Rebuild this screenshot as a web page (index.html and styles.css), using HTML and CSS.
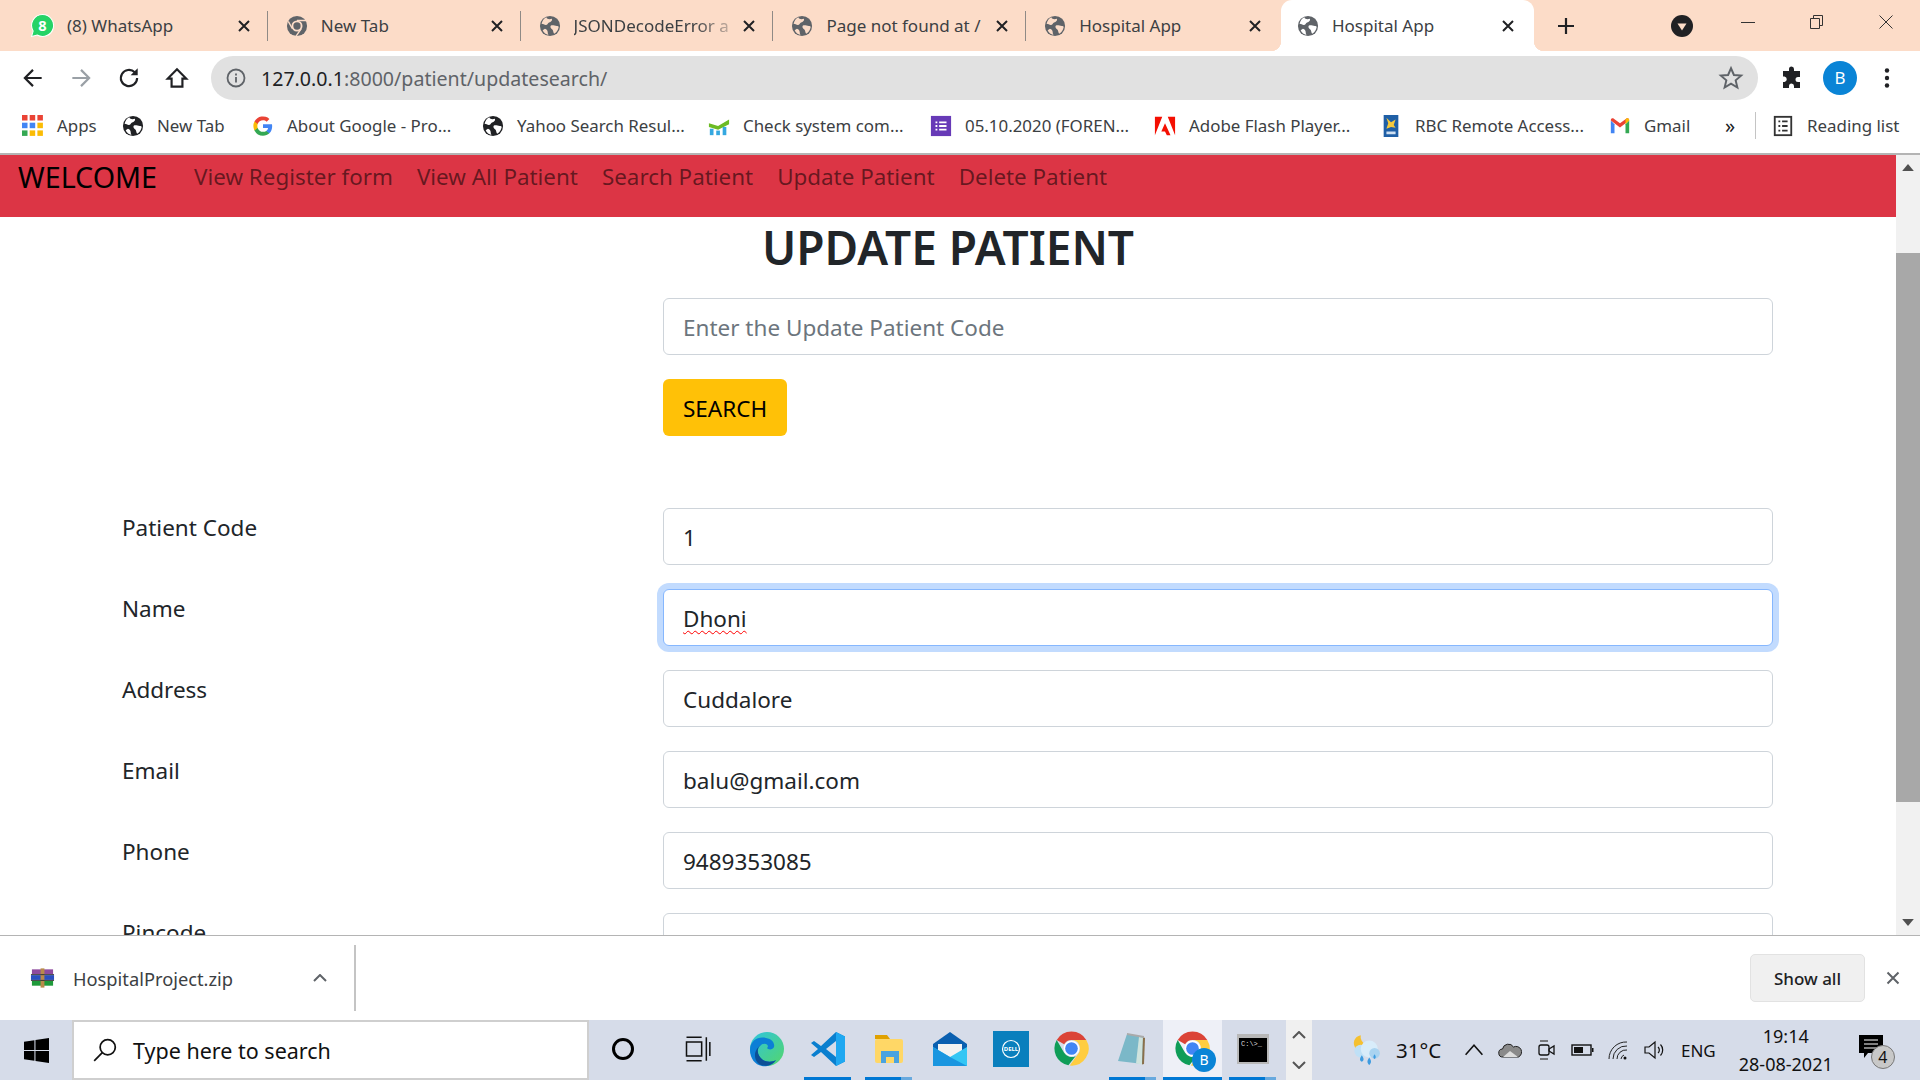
FILE: index.html
```html
<!DOCTYPE html>
<html>
<head>
    <meta charset="utf-8">
    <title>Hospital App</title>
    <link rel="stylesheet" href="styles.css">
</head>
<body>
<svg class="defs" width="0" height="0">
    <symbol id="globe" viewBox="0 0 24 24">
        <circle cx="12" cy="12" r="11" fill="currentColor"/>
        <path d="M8 2.5c1 2.5 4 2.3 6 1.500 1 2-1 3.500-3 4.200-1.500.6-1.200 2.300-3.200 2.600-1.800.3-3-1.300-5-1.300C3.500 6.500 5.500 3.800 8 2.500zM13 11.500c2.500-.8 4 .5 6.500.5 1 0 1.800.5 2 1-.6 3.500-2.700 6-5 7.500-1.200-2-.8-4-2.300-5-1.300-.9-2.500-2.500-1.200-4zM6.500 15c1.800.5 3 1.800 3 3.800 0 1 .3 2 .8 3-2.700-.5-5-2.300-6.300-4.800.7-.8 1.500-1.500 2.500-2z" fill="#fcdcc8"/>
    </symbol>
    <symbol id="globe-b" viewBox="0 0 24 24">
        <circle cx="12" cy="12" r="11" fill="currentColor"/>
        <path d="M8 2.5c1 2.5 4 2.3 6 1.500 1 2-1 3.500-3 4.200-1.500.6-1.200 2.300-3.200 2.600-1.800.3-3-1.300-5-1.300C3.500 6.500 5.500 3.800 8 2.500zM13 11.500c2.500-.8 4 .5 6.500.5 1 0 1.800.5 2 1-.6 3.500-2.700 6-5 7.500-1.200-2-.8-4-2.300-5-1.300-.9-2.500-2.500-1.200-4zM6.500 15c1.800.5 3 1.800 3 3.800 0 1 .3 2 .8 3-2.700-.5-5-2.300-6.300-4.800.7-.8 1.500-1.500 2.500-2z" fill="#fff"/>
    </symbol>
    <symbol id="close" viewBox="0 0 14 14">
        <path d="M2 2l10 10M12 2L2 12" stroke="currentColor" stroke-width="2" fill="none"/>
    </symbol>
    <symbol id="chrome" viewBox="0 0 24 24">
        <path d="M12 2a10 10 0 0 1 8.660 5H12a5 5 0 0 0-4.330 2.500L3.340 7A10 10 0 0 1 12 2z" fill="#db4437"/>
        <path d="M3.340 7l4.330 7.500a5 5 0 0 0 6.830 1.830L10.170 21.830A10 10 0 0 1 3.340 7z" fill="#0f9d58"/>
        <path d="M20.660 7H12a5 5 0 0 1 4.330 7.500L11 22A10 10 0 0 0 20.660 7z" fill="#ffcd40"/>
        <circle cx="12" cy="12" r="4.600" fill="#fff"/>
        <circle cx="12" cy="12" r="3.700" fill="#4285f4"/>
    </symbol>
</svg>

<div class="tabstrip">
    <div class="tab">
        <svg class="tab-icon wa" viewBox="0 0 24 24"><path d="M12 1.500a10.500 10.500 0 0 0-9 15.800L1.500 22.500l5.400-1.400A10.500 10.500 0 1 0 12 1.500z" fill="#25d366" stroke="#fff"/><text x="12" y="17" class="wa-count">8</text></svg>
        <span class="tab-title">(8) WhatsApp</span>
        <svg class="tab-close"><use href="#close"/></svg>
    </div>
    <div class="tab">
        <svg class="tab-icon" viewBox="0 0 24 24"><circle cx="12" cy="12" r="11" fill="#5f6368"/><circle cx="12" cy="12" r="6" fill="#fcdcc8"/><circle cx="12" cy="12" r="4" fill="#5f6368"/><path d="M12 6h10M7 15L2.500 7M16.500 15L11 23" stroke="#fcdcc8" stroke-width="1.500"/></svg>
        <span class="tab-title">New Tab</span>
        <svg class="tab-close"><use href="#close"/></svg>
    </div>
    <div class="tab">
        <svg class="tab-icon"><use href="#globe"/></svg>
        <span class="tab-title fade">JSONDecodeError a</span>
        <svg class="tab-close"><use href="#close"/></svg>
    </div>
    <div class="tab">
        <svg class="tab-icon"><use href="#globe"/></svg>
        <span class="tab-title">Page not found at /</span>
        <svg class="tab-close"><use href="#close"/></svg>
    </div>
    <div class="tab no-sep">
        <svg class="tab-icon"><use href="#globe"/></svg>
        <span class="tab-title">Hospital App</span>
        <svg class="tab-close"><use href="#close"/></svg>
    </div>
    <div class="tab active">
        <svg class="tab-icon"><use href="#globe-b"/></svg>
        <span class="tab-title">Hospital App</span>
        <svg class="tab-close"><use href="#close"/></svg>
    </div>
    <svg class="new-tab" viewBox="0 0 18 18"><path d="M9 1v16M1 9h16" stroke="#202124" stroke-width="2.200"/></svg>
    <div class="tab-search"><svg viewBox="0 0 24 24"><circle cx="12" cy="12" r="11" fill="#202124"/><path d="M7.500 9.500h9L12 16.500z" fill="#fcdcc8"/></svg></div>
    <div class="win-btns">
        <svg viewBox="0 0 14 14"><path d="M0 7.500h14" stroke="#333" stroke-width="1"/></svg>
        <svg viewBox="0 0 14 14"><path d="M.5 3.500h9v10h-9zM3.500 3.500v-3h9v10h-3" stroke="#333" fill="none"/></svg>
        <svg viewBox="0 0 14 14"><path d="M.5.500l13 13M13.500.500l-13 13" stroke="#333" fill="none"/></svg>
    </div>
</div>

<div class="toolbar">
    <svg class="nav-icon" viewBox="0 0 24 24"><path d="M20 12H5M12 4.500L4.500 12l7.500 7.500" stroke="#202124" stroke-width="2" fill="none"/></svg>
    <svg class="nav-icon" viewBox="0 0 24 24"><path d="M4 12h15M12 4.500l7.500 7.500-7.500 7.500" stroke="#9aa0a6" stroke-width="2" fill="none"/></svg>
    <svg class="nav-icon" viewBox="0 0 24 24"><path d="M19.500 12a7.500 7.500 0 1 1-2.200-5.300" stroke="#202124" stroke-width="2" fill="none"/><path d="M20 3v6.500h-6.500z" fill="#202124"/></svg>
    <svg class="nav-icon" viewBox="0 0 24 24"><path d="M12 4L3.500 12.500H7V20h10v-7.500h3.500z" stroke="#202124" stroke-width="2" fill="none"/></svg>
    <div class="omnibox">
        <svg class="info" viewBox="0 0 20 20"><circle cx="10" cy="10" r="8.500" stroke="#5f6368" stroke-width="1.800" fill="none"/><path d="M10 9v5.500M10 5.500v2" stroke="#5f6368" stroke-width="1.800"/></svg>
        <span class="url"><b>127.0.0.1</b>:8000/patient/updatesearch/</span>
        <svg class="star" viewBox="0 0 24 24"><path d="M12 3l2.700 6.200 6.700.6-5.100 4.400 1.600 6.600L12 17.300l-5.900 3.500 1.600-6.600-5.100-4.400 6.700-.6z" stroke="#5f6368" stroke-width="1.800" fill="none"/></svg>
    </div>
    <svg class="puzzle" viewBox="0 0 24 24"><path d="M9 3a2.500 2.500 0 0 1 5 0v2h6v6h-2a2.500 2.500 0 0 0 0 5h2v6h-6v-2a2.500 2.500 0 0 0-5 0v2H3v-6h1.500a2.800 2.800 0 0 0 0-5.500H3V5h6z" fill="#202124"/></svg>
    <div class="avatar">B</div>
    <svg class="dots" viewBox="0 0 6 24"><circle cx="3" cy="4.500" r="2.200" fill="#202124"/><circle cx="3" cy="12" r="2.200" fill="#202124"/><circle cx="3" cy="19.500" r="2.200" fill="#202124"/></svg>
</div>

<div class="bookmarks">
    <div class="bm">
        <svg class="bm-icon" viewBox="0 0 20 20">
            <g fill="#ea4335"><rect x="0" y="0" width="5" height="5"/><rect x="7" y="0" width="5" height="5"/><rect x="14" y="0" width="5" height="5"/></g>
            <g fill="#4285f4"><rect x="0" y="7" width="5" height="5"/><rect x="7" y="7" width="5" height="5"/></g>
            <rect x="14" y="7" width="5" height="5" fill="#fbbc05"/>
            <g fill="#34a853"><rect x="0" y="14" width="5" height="5"/></g>
            <g fill="#fbbc05"><rect x="7" y="14" width="5" height="5"/><rect x="14" y="14" width="5" height="5"/></g>
        </svg>Apps
    </div>
    <div class="bm"><svg class="bm-icon globe-dark"><use href="#globe-b"/></svg>New Tab</div>
    <div class="bm">
        <svg class="bm-icon" viewBox="0 0 24 24">
            <path d="M22 12.300c0-.8-.1-1.500-.2-2.200H12v4.200h5.600a4.800 4.800 0 0 1-2.100 3.100v2.600h3.400c2-1.800 3.100-4.500 3.100-7.700z" fill="#4285f4"/>
            <path d="M12 22.500c2.800 0 5.200-.9 6.900-2.500l-3.400-2.600c-.9.600-2.100 1-3.500 1-2.700 0-5-1.800-5.800-4.300H2.700v2.700A10.500 10.500 0 0 0 12 22.500z" fill="#34a853"/>
            <path d="M6.200 14.100a6.300 6.300 0 0 1 0-4.200V7.200H2.700a10.500 10.500 0 0 0 0 9.600z" fill="#fbbc05"/>
            <path d="M12 5.700c1.500 0 2.900.5 4 1.600l3-3A10.500 10.500 0 0 0 2.700 7.200l3.500 2.700C7 7.500 9.300 5.700 12 5.700z" fill="#ea4335"/>
        </svg>About Google - Pro...
    </div>
    <div class="bm"><svg class="bm-icon globe-dark"><use href="#globe-b"/></svg>Yahoo Search Resul...</div>
    <div class="bm">
        <svg class="bm-icon" viewBox="0 0 24 24"><path d="M1 9l10 3 12-7v5l-12 6-10-3z" fill="#6cbb24"/><rect x="2" y="15" width="4" height="7" fill="#35a8e0"/><rect x="9" y="17" width="4" height="5" fill="#35a8e0"/><rect x="16" y="13" width="4" height="9" fill="#35a8e0"/></svg>Check system com...
    </div>
    <div class="bm">
        <svg class="bm-icon" viewBox="0 0 24 24"><rect x="1" y="1" width="22" height="22" fill="#673ab7"/><path d="M6 7h2v2H6zM10 7h8v2h-8zM6 11h2v2H6zM10 11h8v2h-8zM6 15h2v2H6zM10 15h8v2h-8z" fill="#fff"/></svg>05.10.2020 (FOREN...
    </div>
    <div class="bm">
        <svg class="bm-icon" viewBox="0 0 24 24"><path d="M1 2h8L1 22zM15 2h8v20zM12 9l6 13h-4l-2-4H8z" fill="#f40f02"/></svg>Adobe Flash Player...
    </div>
    <div class="bm">
        <svg class="bm-icon" viewBox="0 0 24 24"><rect x="4" y="0" width="16" height="24" fill="#1f5fa6"/><path d="M7 3l5 5 5-3-2 6 2 3-5-1-5 2 2-6z" fill="#f6c93c"/><rect x="7" y="18" width="10" height="3" fill="#cfe0f2"/></svg>RBC Remote Access...
    </div>
    <div class="bm">
        <svg class="bm-icon" viewBox="0 0 24 24"><path d="M2 6v14h4V10z" fill="#4285f4"/><path d="M22 6v14h-4V10z" fill="#34a853"/><path d="M2 6l10 7.500L22 6v-.5c0-1.800-2-2.500-3.300-1.500L12 9 5.300 4C4 3 2 3.700 2 5.500z" fill="#ea4335"/><path d="M18 10l4-4v-.5c0-1.800-2-2.500-3.300-1.500L18 4.500z" fill="#fbbc05"/></svg>Gmail
    </div>
    <div class="bm-more">»</div>
    <div class="bm-sep"></div>
    <div class="bm">
        <svg class="bm-icon reading" viewBox="0 0 24 24"><rect x="3" y="2" width="18" height="20" stroke="#333" stroke-width="2" fill="none"/><path d="M7 7h2M11 7h6M7 12h2M11 12h6M7 17h2M11 17h6" stroke="#333" stroke-width="2"/></svg>Reading list
    </div>
</div>

<div class="viewport">
    <div class="page">
        <nav class="navbar">
            <a class="brand">WELCOME</a>
            <a class="nav-link">View Register form</a>
            <a class="nav-link">View All Patient</a>
            <a class="nav-link">Search Patient</a>
            <a class="nav-link">Update Patient</a>
            <a class="nav-link">Delete Patient</a>
        </nav>
        <h1 class="title">UPDATE PATIENT</h1>
        <div class="search-box">
            <input class="form-control" placeholder="Enter the Update Patient Code">
            <button class="btn-search">SEARCH</button>
        </div>
        <div class="patient-form">
            <label>Patient Code</label>
            <input class="form-control" value="1">
            <label>Name</label>
            <div class="form-control focused"><span class="misspelt">Dhoni</span></div>
            <label>Address</label>
            <input class="form-control" value="Cuddalore">
            <label>Email</label>
            <input class="form-control" value="balu@gmail.com">
            <label>Phone</label>
            <input class="form-control" value="9489353085">
            <label>Pincode</label>
            <input class="form-control">
        </div>
    </div>
    <div class="scrollbar">
        <svg class="arrow" viewBox="0 0 10 6"><path d="M5 0l5 6H0z" fill="#505050"/></svg>
        <div class="thumb"></div>
        <svg class="arrow" viewBox="0 0 10 6"><path d="M5 6l5-6H0z" fill="#505050"/></svg>
    </div>
</div>

<div class="download-bar">
    <div class="download-item">
        <svg class="zip-icon" viewBox="0 0 26 20">
            <rect x="2" y="1" width="22" height="5" fill="#8e4a9e"/><rect x="1" y="7" width="24" height="5" fill="#2a4fc0"/><rect x="2" y="13" width="22" height="5" fill="#1f9a3a"/>
            <path d="M11 0h4v20h-4z" fill="#b98a4a"/><path d="M1 6.500h24M1 12.500h24" stroke="#333"/>
        </svg>
        <span class="zip-name">HospitalProject.zip</span>
        <svg class="chev" viewBox="0 0 14 8"><path d="M1 7l6-6 6 6" stroke="#5f6368" stroke-width="2" fill="none"/></svg>
    </div>
    <div class="download-right">
        <button class="show-all">Show all</button>
        <svg class="bar-close" viewBox="0 0 14 14"><path d="M1.500 1.500l11 11M12.500 1.500l-11 11" stroke="#5f6368" stroke-width="2"/></svg>
    </div>
</div>

<div class="taskbar">
    <div class="start"><svg viewBox="0 0 24 24"><path d="M0 3.500l10-1.400V11.500H0zM11 2l13-2v11.500H11zM0 12.500h10v9.400L0 20.500zM11 12.500h13V24l-13-2z" fill="#000"/></svg></div>
    <div class="task-search">
        <svg viewBox="0 0 24 24"><circle cx="14.500" cy="9.500" r="7" stroke="#111" stroke-width="1.600" fill="none"/><path d="M9.500 14.500L2 22" stroke="#111" stroke-width="1.600"/></svg>
        <span>Type here to search</span>
    </div>
    <div class="task-apps">
        <div class="app slot-cortana"><svg class="cortana" viewBox="0 0 24 24"><circle cx="12" cy="12" r="9.500" stroke="#000" stroke-width="3" fill="none"/></svg></div>
        <div class="app slot-view"><svg class="taskview" viewBox="0 0 24 24"><path d="M3 6h13v12H3zM20 2v20M23 6v12M3 2h13M3 22h13" stroke="#111" stroke-width="1.300" fill="none"/></svg></div>
        <div class="app">
            <svg viewBox="0 0 36 36">
                <defs><linearGradient id="edge" x1="0" y1="0" x2="1" y2="1"><stop offset="0" stop-color="#2fc4e0"/><stop offset="1" stop-color="#54d66a"/></linearGradient></defs>
                <circle cx="18" cy="18" r="17" fill="url(#edge)"/>
                <path d="M1 19C1 9 10 5 17 7c6 1 9 5 8 9-1 3-6 3-7 1 3-3-2-6-6-3-5 3-4 11 2 15 4 2.500 10 2 13 0-3 5-9 7-14 6C6 34 1 27 1 19z" fill="#0c7fd6"/>
                <path d="M12 14c-5 3-4 11 2 15 4 2.500 10 2 13 0-3 5-10 7-15 5-7-3-9-14 0-20z" fill="#0c4f96"/>
            </svg>
        </div>
        <div class="app running">
            <svg viewBox="0 0 36 36"><path d="M26 1l9 4.500v25L26 35 11 21l-7 5-3-2 7-6-7-6 3-2 7 5z" fill="#0a7fcf"/><path d="M26 1l9 4.500v25L26 35z" fill="#1fa8f1"/><path d="M26 10L16 18l10 8z" fill="#d6dce9"/></svg>
        </div>
        <div class="app running more">
            <svg viewBox="0 0 36 36"><path d="M4 4h12l3 4H4z" fill="#e0a100"/><rect x="4" y="8" width="28" height="24" rx="2" fill="#ffd766"/><path d="M10 20h18v12h-5v-6h-8v6h-5z" fill="#4aa3e0"/></svg>
        </div>
        <div class="app">
            <svg viewBox="0 0 36 36"><path d="M18 1L35 13v22H1V13z" fill="#0a5fb0"/><path d="M6 13h24v8l-12 6-12-6z" fill="#f2f2f2"/><path d="M1 16l17 10 17-10v19H1z" fill="#34c6f4"/><path d="M1 16l17 10L35 35H1z" fill="#1a96e0"/></svg>
        </div>
        <div class="app">
            <svg viewBox="0 0 36 36"><rect width="36" height="36" fill="#0a7fbd"/><circle cx="18" cy="18" r="8.500" stroke="#fff" stroke-width="1.200" fill="none"/><text x="18" y="20" class="dell-word">DELL</text></svg>
        </div>
        <div class="app"><svg class="chrome" viewBox="0 0 24 24"><use href="#chrome"/></svg></div>
        <div class="app running more">
            <svg viewBox="0 0 36 36"><path d="M12 3l17 3-1 27-25-3z" fill="#7bb8c8"/><path d="M24 6l4 .5-1 27-6-1z" fill="#cfe3dd"/><path d="M28 6l2 1-1 26-2 .5z" fill="#8a6f4a"/><path d="M12 2l17 3v2L12 4z" fill="#aaa"/></svg>
        </div>
        <div class="app running app-active">
            <svg class="chrome" viewBox="0 0 24 24"><use href="#chrome"/></svg>
            <span class="profile-badge">B</span>
        </div>
        <div class="app running more">
            <svg viewBox="0 0 36 36"><rect x="2" y="3" width="32" height="30" fill="#b8b8b8"/><rect x="4" y="7" width="28" height="24" fill="#000"/><text x="6" y="15" class="cmd-text">C:\&gt;_</text></svg>
        </div>
    </div>
    <div class="tray-scroll">
        <svg viewBox="0 0 14 8"><path d="M1 7l6-6 6 6" stroke="#555" stroke-width="2" fill="none"/></svg>
        <svg viewBox="0 0 14 8"><path d="M1 1l6 6 6-6" stroke="#555" stroke-width="2" fill="none"/></svg>
    </div>
    <div class="tray">
        <svg class="weather" viewBox="0 0 32 32"><path d="M12 2a8 8 0 0 0 5 9l-9 4C3 10 6 3 12 2z" fill="#f5c030"/><circle cx="12" cy="17" r="6" fill="#bfe0f6"/><circle cx="20" cy="15" r="8" fill="#d8ecfa"/><circle cx="25" cy="19" r="5" fill="#a9d3f0"/><path d="M13 21c2.200 3 2.200 5 0 6-2.200-1-2.200-3 0-6zM20 23c2.200 3 2.200 5 0 7-2.200-2-2.200-4 0-7zM25 20c1.500 2 1.500 3.500 0 4.500-1.500-1-1.500-2.500 0-4.500z" fill="#3d9be0"/></svg>
        <span class="temp">31°C</span>
        <svg class="tray-ic up" viewBox="0 0 20 20"><path d="M3 14l7-8 7 8" stroke="#111" stroke-width="1.300" fill="none"/></svg>
        <svg class="tray-ic" viewBox="0 0 24 24"><path d="M5 19a4 4 0 0 1-.5-8 6 6 0 0 1 11-2 5 5 0 0 1 5 10z" fill="#8a8a8a" stroke="#222" stroke-width="1"/><path d="M5 19l7-6 8 6z" fill="#ddd"/></svg>
        <svg class="tray-ic" viewBox="0 0 24 24"><rect x="5" y="7" width="10" height="10" rx="2" stroke="#111" stroke-width="1.300" fill="none"/><path d="M15 11l5-3v8l-5-3z" stroke="#111" stroke-width="1.300" fill="none"/><path d="M6 3h8M6 21h8" stroke="#555" stroke-width="1.300"/></svg>
        <svg class="tray-ic" viewBox="0 0 24 24"><rect x="2" y="7" width="19" height="10" stroke="#111" stroke-width="1.400" fill="none"/><rect x="4" y="9" width="9" height="6" fill="#111"/><path d="M22 10h1.500v4H22z" fill="#111"/></svg>
        <svg class="tray-ic" viewBox="0 0 24 24"><path d="M3 21A17 17 0 0 1 21 4M7 21A13 13 0 0 1 21 8M11 21a9 9 0 0 1 10-9M15 21a5 5 0 0 1 3-4" stroke="#222" stroke-width="1" fill="none"/><circle cx="19" cy="20" r="1.500" fill="#111"/></svg>
        <svg class="tray-ic" viewBox="0 0 24 24"><path d="M3 9h4l6-5v16l-6-5H3z" stroke="#111" stroke-width="1.200" fill="none"/><path d="M16 9a4 4 0 0 1 0 6M18.500 6.500a8 8 0 0 1 0 11" stroke="#111" stroke-width="1.200" fill="none"/></svg>
        <span class="lang">ENG</span>
        <div class="clock"><span>19:14</span><span>28-08-2021</span></div>
        <div class="notif">
            <svg viewBox="0 0 24 24"><path d="M0 0h24v18H9l-4 5v-5H0z" fill="#000"/><path d="M5 5h14M5 9h14M5 13h14" stroke="#fff" stroke-width="1"/></svg>
            <span class="notif-count">4</span>
        </div>
    </div>
</div>
</body>
</html>
```

FILE: styles.css
```css
* {
    margin: 0;
    padding: 0;
    box-sizing: border-box;
}
html, body {
    width: 1920px;
    height: 1080px;
    overflow: hidden;
}
body {
    display: flex;
    flex-direction: column;
    font-family: "Noto Sans", "Open Sans", sans-serif;
    background: #fff;
    color: #202124;
}
.defs {
    position: absolute;
}

/* tabs */
.tabstrip {
    height: 51px;
    flex: none;
    display: flex;
    align-items: stretch;
    padding-left: 17px;
    background: #fcdcc8;
    font-size: 17px;
}
.tab {
    position: relative;
    width: 252.8px;
    flex: none;
    display: flex;
    align-items: center;
    padding: 0 16px;
    color: #3c4043;
}
.tab::after {
    content: "";
    position: absolute;
    right: 2px;
    top: 11px;
    bottom: 10px;
    width: 1px;
    background: #8f8a86;
}
.tab.no-sep::after {
    display: none;
}
.tab.active {
    background: #fff;
    border-radius: 11px 11px 0 0;
}
.tab.active::before,
.tab.active::after {
    content: "";
    position: absolute;
    bottom: 0;
    width: 10px;
    height: 10px;
    background: radial-gradient(circle at 0 0, #fcdcc8 10px, #fff 10.5px);
}
.tab.active::before {
    left: -10px;
}
.tab.active::after {
    top: auto;
    right: -10px;
    background: radial-gradient(circle at 100% 0, #fcdcc8 10px, #fff 10.5px);
}
.tab-icon {
    width: 22px;
    height: 22px;
    flex: none;
    color: #5f6368;
}
.tab-icon.wa {
    width: 25px;
    height: 25px;
    margin: 0 -1px 0 -3px;
}
.wa-count {
    font-size: 14px;
    font-weight: 700;
    fill: #fff;
    text-anchor: middle;
}
.tab-title {
    flex: 1;
    margin-left: 13px;
    white-space: nowrap;
}
.fade {
    -webkit-mask-image: linear-gradient(to right, #000 120px, transparent 170px);
}
.tab-close {
    width: 14px;
    height: 14px;
    flex: none;
    color: #202124;
    margin-right: 3px;
}
.new-tab {
    width: 18px;
    height: 18px;
    flex: none;
    align-self: center;
    margin-left: 23px;
}
.tab-search {
    flex: none;
    align-self: center;
    width: 24px;
    height: 24px;
    margin-left: 95px;
}
.win-btns {
    display: flex;
    align-items: flex-start;
    flex: none;
    gap: 55px;
    margin-left: 47px;
    padding-top: 15px;
}
.win-btns svg {
    width: 14px;
    height: 14px;
}

/* toolbar */
.toolbar {
    height: 54px;
    flex: none;
    display: flex;
    align-items: center;
    padding-left: 20px;
    background: #fff;
}
.nav-icon {
    width: 26px;
    height: 26px;
    flex: none;
    margin-right: 22px;
}
.nav-icon:nth-child(4) {
    margin-right: 0;
}
.omnibox {
    width: 1547px;
    height: 44px;
    flex: none;
    margin-left: 21px;
    display: flex;
    align-items: center;
    padding: 0 14px 0 15px;
    background: #e1e1e1;
    border-radius: 22px;
}
.info {
    width: 20px;
    height: 20px;
    flex: none;
}
.url {
    flex: 1;
    margin-left: 15px;
    font-size: 19.6px;
    color: #5f6368;
}
.url b {
    font-weight: 400;
    color: #202124;
}
.star {
    width: 26px;
    height: 26px;
    flex: none;
}
.puzzle {
    width: 24px;
    height: 24px;
    flex: none;
    margin-left: 22px;
}
.avatar {
    width: 34px;
    height: 34px;
    flex: none;
    margin-left: 19px;
    border-radius: 50%;
    background: #0a84d6;
    color: #fff;
    font-size: 17px;
    line-height: 34px;
    text-align: center;
}
.dots {
    width: 6px;
    height: 24px;
    flex: none;
    margin-left: 27px;
}

/* bookmarks */
.bookmarks {
    height: 50px;
    flex: none;
    display: grid;
    grid-template-columns: 100px 130px 230px 226px 222px 224px 226px 229px 116px 30px 17px 1fr;
    align-items: center;
    padding: 0 0 7px 22px;
    background: #fff;
    border-bottom: 2px solid #b4b4b4;
    font-size: 16.9px;
    color: #3c4043;
    white-space: nowrap;
}
.bm {
    display: flex;
    align-items: center;
    gap: 13px;
}
.bm-icon {
    width: 22px;
    height: 22px;
    flex: none;
}
.globe-dark {
    color: #202124;
}
.bm-more {
    font-size: 20px;
    color: #202124;
}
.bm-sep {
    width: 1px;
    height: 27px;
    background: #c4c4c4;
}

/* page */
.viewport {
    flex: 1;
    min-height: 0;
    display: flex;
    overflow: hidden;
}
.page {
    width: 1896px;
    flex: none;
    overflow: hidden;
    color: #212529;
    font-size: 22.5px;
}
.navbar {
    height: 62px;
    display: flex;
    align-items: flex-start;
    gap: 24px;
    padding: 2px 0 0 18px;
    background: #dc3545;
}
.brand {
    font-size: 28.7px;
    line-height: 40px;
    color: #000;
    margin-right: 13px;
}
.nav-link {
    font-size: 22.4px;
    line-height: 40px;
    color: rgba(0, 0, 0, .55);
}
.title {
    font-size: 46px;
    line-height: 60px;
    font-weight: 600;
    text-align: center;
}
.form-control {
    display: block;
    width: 100%;
    height: 57px;
    padding: 2px 19px 0;
    background: #fff;
    border: 1.5px solid #ced4da;
    border-radius: 6px;
    font-family: inherit;
    font-size: 22.5px;
    line-height: 53px;
    color: #212529;
}
.form-control::placeholder {
    color: #6c757d;
}
.focused {
    border-color: #86b7fe;
    box-shadow: 0 0 0 6px rgba(13, 110, 253, .25);
}
.misspelt {
    text-decoration: underline wavy #f00 1.4px;
    text-underline-offset: 3px;
}
.search-box {
    width: 1110px;
    margin: 21px 0 0 663px;
}
.btn-search {
    display: block;
    height: 57px;
    padding: 2px 20px 0;
    margin-top: 24px;
    background: #ffc107;
    border: none;
    border-radius: 6px;
    font-family: inherit;
    font-size: 22.5px;
    color: #000;
}
.patient-form {
    display: grid;
    grid-template-columns: 541px 1110px;
    row-gap: 24px;
    padding-left: 122px;
    margin-top: 72px;
}
.patient-form label {
    padding-top: 2px;
    line-height: 36px;
}
.scrollbar {
    width: 24px;
    flex: none;
    display: flex;
    flex-direction: column;
    align-items: center;
    background: #f1f1f1;
}
.arrow {
    width: 12px;
    height: 7px;
    flex: none;
    margin: 9px 0;
}
.thumb {
    width: 100%;
    height: 549px;
    margin-top: 73px;
    margin-bottom: auto;
    background: #a8a8a8;
}

/* downloads */
.download-bar {
    height: 85px;
    flex: none;
    display: flex;
    align-items: center;
    justify-content: space-between;
    background: #fff;
    border-top: 1px solid #b4b4b4;
}
.download-item {
    width: 356px;
    height: 66px;
    display: flex;
    align-items: center;
    padding-left: 30px;
    border-right: 2px solid #c4c4c4;
}
.zip-icon {
    width: 25px;
    height: 20px;
    flex: none;
}
.zip-name {
    margin-left: 18px;
    font-size: 18.3px;
    color: #3c4043;
}
.chev {
    width: 14px;
    height: 8px;
    margin-left: 80px;
}
.download-right {
    display: flex;
    align-items: center;
    padding-right: 20px;
}
.show-all {
    width: 115px;
    height: 48px;
    background: #f0f0f0;
    border: 1px solid #e2e2e2;
    border-radius: 5px;
    font-family: inherit;
    font-size: 17px;
    font-weight: 500;
    color: #202124;
}
.bar-close {
    width: 14px;
    height: 14px;
    margin-left: 21px;
}

/* taskbar */
.taskbar {
    height: 60px;
    flex: none;
    display: flex;
    align-items: stretch;
    background: #d6dce9;
    color: #111;
}
.start {
    width: 72px;
    flex: none;
    display: flex;
    align-items: center;
    justify-content: center;
}
.start svg {
    width: 25px;
    height: 25px;
}
.task-search {
    width: 517px;
    flex: none;
    display: flex;
    align-items: center;
    gap: 15px;
    padding-left: 18px;
    background: #fff;
    border: 2px solid #cfcfcf;
    font-size: 21.5px;
}
.task-search svg {
    width: 26px;
    height: 26px;
}
.task-apps {
    display: flex;
    flex: none;
    width: 697px;
}
.app {
    position: relative;
    width: 47px;
    margin: 0 7px;
    flex: none;
    display: flex;
    align-items: center;
    justify-content: center;
    border-bottom: 3px solid transparent;
}
.app svg {
    width: 36px;
    height: 36px;
    flex: none;
}
.app svg.chrome {
    width: 41px;
    height: 41px;
}
.slot-cortana {
    width: 68px;
    margin: 0;
}
.slot-view {
    width: 79px;
    margin: 0;
}
.app .cortana {
    width: 24px;
    height: 24px;
}
.app .taskview {
    width: 28px;
    height: 28px;
}
.running {
    border-bottom-color: #0078d4;
}
.more {
    border-image: linear-gradient(to right, #0078d4 75%, #68a9de 75%) 1;
}
.app-active {
    width: 59px;
    margin: 0;
    background: #eef0f7;
}
.profile-badge {
    position: absolute;
    right: 6px;
    bottom: 5px;
    width: 24px;
    height: 24px;
    border-radius: 50%;
    background: #0a84d6;
    color: #fff;
    font-size: 14px;
    line-height: 24px;
    text-align: center;
}
.dell-word {
    font-size: 6px;
    font-weight: 700;
    fill: #fff;
    text-anchor: middle;
}
.cmd-text {
    font-size: 7px;
    fill: #ddd;
    font-family: "Liberation Mono", monospace;
}
.tray-scroll {
    width: 26px;
    flex: none;
    display: flex;
    flex-direction: column;
    align-items: center;
    justify-content: space-around;
    background: #f0f0f0;
}
.tray-scroll svg {
    width: 14px;
    height: 8px;
}
.tray {
    flex: 1;
    display: flex;
    align-items: center;
    padding-left: 36px;
}
.weather {
    width: 34px;
    height: 34px;
    flex: none;
}
.temp {
    width: 62px;
    margin-left: 14px;
    font-size: 20.5px;
}
.tray-ic {
    width: 24px;
    height: 24px;
    flex: none;
    margin-right: 12px;
}
.up {
    margin-left: 4px;
}
.lang {
    margin-left: 3px;
    font-size: 17px;
}
.clock {
    width: 120px;
    margin-left: 10px;
    display: flex;
    flex-direction: column;
    align-items: center;
    gap: 6px;
    font-size: 18px;
    line-height: 22px;
}
.notif {
    position: relative;
    width: 30px;
    height: 30px;
    margin-left: 13px;
}
.notif svg {
    width: 24px;
    height: 24px;
}
.notif-count {
    position: absolute;
    left: 12px;
    top: 10px;
    width: 24px;
    height: 24px;
    border: 1px solid #777;
    border-radius: 50%;
    background: #c8c8c8;
    font-size: 16px;
    line-height: 22px;
    text-align: center;
}
```
